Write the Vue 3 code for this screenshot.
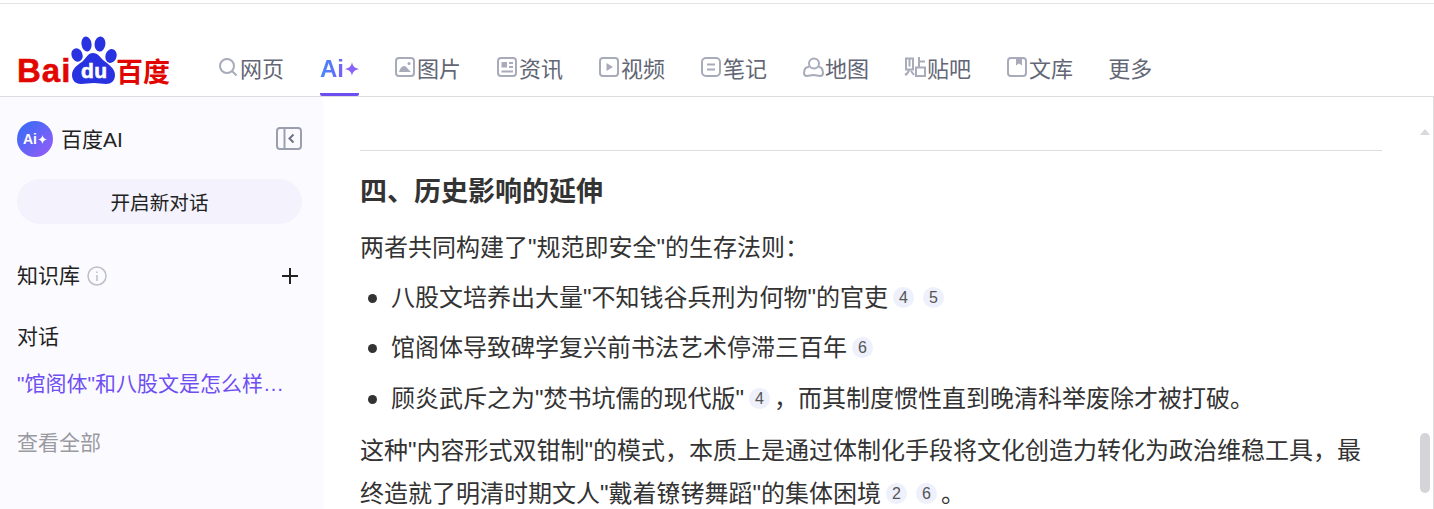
<template>
  <div class="page">
    <header class="topbar">
      <a class="logo">
        <svg width="155" height="56" viewBox="0 0 155 56">
          <text x="0" y="46" class="logo-text">Bai</text>
          <ellipse cx="60" cy="19" rx="5.5" ry="6.8" fill="#2932e1" transform="rotate(-22 60 19)" />
          <ellipse cx="69.500" cy="8" rx="5" ry="7.600" fill="#2932e1" transform="rotate(-8 69.500 8)" />
          <ellipse cx="83" cy="8" rx="5.400" ry="7.600" fill="#2932e1" transform="rotate(6 83 8)" />
          <ellipse cx="94" cy="20" rx="5.600" ry="7" fill="#2932e1" transform="rotate(16 94 20)" />
          <path d="M76 17c5 0 7 4 10 7 5 4 12 8 12 15 0 6-4 9-9 9-4 0-8-1-12-1-5 0-9 1-13 1-6 0-9-4-9-9 0-7 7-11 11-14 3-3 5-8 10-8z" fill="#2932e1" />
          <text x="64" y="42" class="logo-du">du</text>
          <text x="99" y="46" class="logo-cn">百度</text>
        </svg>
      </a>
      <nav class="tabs">
        <template v-for="t in tabs" :key="t.label">
          <a v-if="t.label === 'Ai'" class="tab tab-ai">
            <span class="ai-word">Ai</span>
            <svg width="14" height="14" viewBox="0 0 14 14"><path d="M7 0c.7 4 2.500 6 7 7-4.500 1-6.300 3-7 7-.7-4-2.500-6-7-7 4.500-1 6.300-3 7-7z" fill="#8a63f7" /></svg>
          </a>
          <a v-else class="tab">
            <svg v-if="t.icon" class="tab-icon" width="22" height="22" viewBox="0 0 22 22" fill="none" stroke="#a8abba" stroke-width="2" v-html="t.icon"></svg>
            <span>{{ t.label }}</span>
          </a>
        </template>
      </nav>
    </header>

    <div class="body">
      <aside class="side">
        <div class="brand">
          <div class="brand-mark">
            <span class="brand-ai">Ai</span>
            <svg width="9" height="9" viewBox="0 0 10 10"><path d="M5 0c.5 3 2 4.500 5 5-3 .5-4.500 2-5 5-.5-3-2-4.500-5-5 3-.5 4.500-2 5-5z" fill="#fff" /></svg>
          </div>
          <span class="brand-name">百度AI</span>
          <svg class="collapse" width="26" height="23" viewBox="0 0 26 23" fill="none" stroke="#9a9fb0" stroke-width="2">
            <rect x="1" y="1" width="24" height="21" rx="3" />
            <path d="M8.500 1v21" />
            <path d="M17.500 7.500l-4 4 4 4" stroke="#6d7285" />
          </svg>
        </div>

        <button class="new-chat">开启新对话</button>

        <div class="kb-row">
          <span class="kb-label">知识库</span>
          <svg class="info" width="20" height="20" viewBox="0 0 20 20" fill="none" stroke="#bcbfca" stroke-width="1.500">
            <circle cx="10" cy="10" r="9" />
            <path d="M10 9v6" />
            <path d="M10 5.500v1.500" />
          </svg>
          <svg class="plus" width="16" height="16" viewBox="0 0 16 16" stroke="#222" stroke-width="2"><path d="M8 0v16M0 8h16" /></svg>
        </div>

        <div class="chat-title">对话</div>
        <div class="chat-item">"馆阁体"和八股文是怎么样…</div>
        <div class="see-all">查看全部</div>
      </aside>

      <main class="content">
        <hr class="rule" />
        <h3 class="heading">四、历史影响的延伸</h3>
        <p class="para">两者共同构建了"规范即安全"的生存法则：</p>
        <ul class="points">
          <li>八股文培养出大量"不知钱谷兵刑为何物"的官吏<span class="cite">4</span><span class="cite">5</span></li>
          <li>馆阁体导致碑学复兴前书法艺术停滞三百年<span class="cite">6</span></li>
          <li>顾炎武斥之为"焚书坑儒的现代版"<span class="cite">4</span>，而其制度惯性直到晚清科举废除才被打破。</li>
        </ul>
        <p class="para wrap">这种"内容形式双钳制"的模式，本质上是通过体制化手段将文化创造力转化为政治维稳工具，最<br />终造就了明清时期文人"戴着镣铐舞蹈"的集体困境<span class="cite">2</span><span class="cite">6</span>。</p>

        <div class="scroll-up"></div>
        <div class="scroll-thumb"></div>
      </main>
    </div>
  </div>
</template>

<script setup>
const tabs = [
  { label: "网页", icon: '<circle cx="10" cy="10" r="7"/><path d="M15 15l4.500 4.500"/>' },
  { label: "Ai" },
  { label: "图片", icon: '<rect x="2" y="2" width="18" height="18" rx="3"/><circle cx="15" cy="7.500" r="1.500" fill="#a8abba" stroke="none"/><path d="M5 16c1-4 3-6 5-6s3 2 4 3l3 3z" fill="#a8abba" stroke="none"/>' },
  { label: "资讯", icon: '<rect x="2" y="2" width="18" height="18" rx="3"/><rect x="5.500" y="6" width="5.500" height="5.500" fill="#a8abba" stroke="none"/><path d="M13 7h4M13 11h4M5.500 15.500h11.500" stroke-width="1.800"/>' },
  { label: "视频", icon: '<rect x="2" y="2" width="18" height="18" rx="3"/><path d="M8.500 7v8l6.500-4z" fill="#a8abba" stroke="none"/>' },
  { label: "笔记", icon: '<rect x="2" y="2" width="18" height="18" rx="4"/><path d="M7 8.500h8M7 13.500h8"/>' },
  { label: "地图", icon: '<circle cx="12" cy="7.500" r="5"/><path d="M7 11c-2.500 0-4 1-4.500 3l-.5 3c0 2 1.500 3 3 3 2 0 4-1 6.500-1s4.500 1 6.500 1c1.500 0 3-1 3-3l-.5-3c-.5-2-2-3-4-3"/>' },
  { label: "贴吧", icon: '<path d="M2 2.500h7v11H2zM5.500 2.500v8M5 14c-.5 2.500-2 4-4 5M7 15l3 4M15 1v10M15 5.500h6M12 11.500h9v8.500h-9z"/>' },
  { label: "文库", icon: '<rect x="2" y="2" width="18" height="18" rx="3"/><path d="M10 2h6v7.500l-3-2-3 2z" fill="#a8abba" stroke="none"/>' },
  { label: "更多" },
];
</script>

<style>
body {
  margin: 0;
}
</style>

<style scoped>
.page {
  width: 1434px;
  height: 509px;
  overflow: hidden;
  background: #fff;
  color: #333;
  font-family: "Liberation Sans", "Noto Sans CJK SC", sans-serif;
}

.topbar {
  display: flex;
  align-items: flex-start;
  height: 92px;
  margin-top: 3px;
  border-top: 1px solid #e4e4e4;
  border-bottom: 1px solid #ddd;
}

.logo {
  margin: 32px 0 0 17px;
  height: 56px;
}

.logo svg {
  display: block;
}

.logo-text {
  font: 700 33px "Liberation Sans", sans-serif;
  letter-spacing: 1px;
  fill: #e10601;
  stroke: #e10601;
  stroke-width: 0.5px;
}

.logo-du {
  font: 700 21px "Liberation Sans", sans-serif;
  letter-spacing: 0.5px;
  fill: #fff;
  stroke: #fff;
  stroke-width: 0.6px;
}

.logo-cn {
  font: 700 27px "Noto Sans CJK SC", sans-serif;
  fill: #e10601;
}

.tabs {
  display: flex;
  gap: 35px;
  margin-left: 45px;
  height: 92px;
}

.tab {
  display: flex;
  align-items: center;
  gap: 1px;
  height: 89px;
  padding-top: 37px;
  box-sizing: border-box;
  font-size: 22px;
  color: #626675;
}

.tab-ai {
  width: 39px;
  height: 92px;
  margin-left: 1px;
  padding-top: 40px;
  border-bottom: 3px solid #6b4ff0;
  border-radius: 0 0 2px 2px;
}

.ai-word {
  font-size: 24px;
  font-weight: 700;
  color: transparent;
  background: linear-gradient(100deg, #3d8dff, #7b5cf5);
  -webkit-background-clip: text;
  background-clip: text;
}

.tab-icon {
  flex-shrink: 0;
}

.body {
  display: flex;
  height: 412px;
}

.side {
  width: 323px;
  flex-shrink: 0;
  padding: 24px 21px 0 17px;
  box-sizing: border-box;
  background: #fbfbff;
  font-size: 21px;
  color: #222;
}

.brand {
  display: flex;
  align-items: center;
  height: 36px;
}

.brand-mark {
  display: flex;
  align-items: center;
  justify-content: center;
  gap: 1px;
  width: 36px;
  height: 36px;
  border-radius: 50%;
  background: linear-gradient(135deg, #2f6cf6, #9a5cf8);
}

.brand-ai {
  font-size: 14px;
  font-weight: 700;
  color: #fff;
}

.brand-name {
  margin-left: 8px;
  padding-bottom: 2px;
  flex: 1;
}

.collapse {
  margin-top: -2px;
}

.new-chat {
  display: block;
  width: 285px;
  height: 45px;
  margin-top: 22px;
  padding: 0;
  border: none;
  border-radius: 23px;
  background: #f3f2fd;
  color: #222;
  font-family: inherit;
  font-size: 19.600px;
}

.kb-row {
  display: flex;
  align-items: center;
  margin-top: 37px;
  height: 28px;
}

.kb-label {
  margin-top: -2px;
}

.info {
  margin-left: 7px;
  margin-top: 2px;
}

.plus {
  margin-left: auto;
  margin-right: 4px;
  margin-top: 2px;
}

.chat-title {
  margin-top: 34px;
  line-height: 28px;
}

.chat-item {
  margin-top: 19px;
  line-height: 28px;
  color: #6f4ff2;
  white-space: nowrap;
}

.see-all {
  margin-top: 31px;
  line-height: 28px;
  color: #9a9aa2;
}

.content {
  position: relative;
  flex: 1;
  padding: 53px 51px 0 37px;
  border-right: 1px solid #ddd;
  box-sizing: border-box;
  overflow: hidden;
  font-size: 24px;
}

.rule {
  height: 1px;
  margin: 0;
  border: none;
  background: #ddd;
}

.heading {
  margin: 23px 0 0;
  font-size: 27px;
  line-height: 36px;
  font-weight: 700;
}

.para {
  margin: 20px 0 0;
  line-height: 36px;
}

.points {
  margin: -1px 0 0;
  padding: 0 0 0 31px;
  list-style: none;
}

.points li {
  position: relative;
  margin-top: 14.500px;
  line-height: 36px;
}

.points li::before {
  content: "";
  position: absolute;
  left: -23px;
  top: 14px;
  width: 9px;
  height: 9px;
  border-radius: 50%;
  background: #333;
}

.wrap {
  margin-top: 12px;
  line-height: 43px;
}

.cite {
  display: inline-block;
  width: 21px;
  height: 21px;
  margin: 0 4px 0 5px;
  border-radius: 50%;
  background: #eef0fb;
  color: #555;
  font-size: 16px;
  line-height: 21px;
  text-align: center;
  vertical-align: 3px;
}

.scroll-up {
  position: absolute;
  top: 32px;
  right: 3px;
  width: 0;
  height: 0;
  border-left: 5px solid transparent;
  border-right: 5px solid transparent;
  border-bottom: 6px solid #d8d8dd;
}

.scroll-thumb {
  position: absolute;
  top: 336px;
  right: 3px;
  width: 10px;
  height: 60px;
  border-radius: 5px;
  background: #d4d4d9;
}
</style>
